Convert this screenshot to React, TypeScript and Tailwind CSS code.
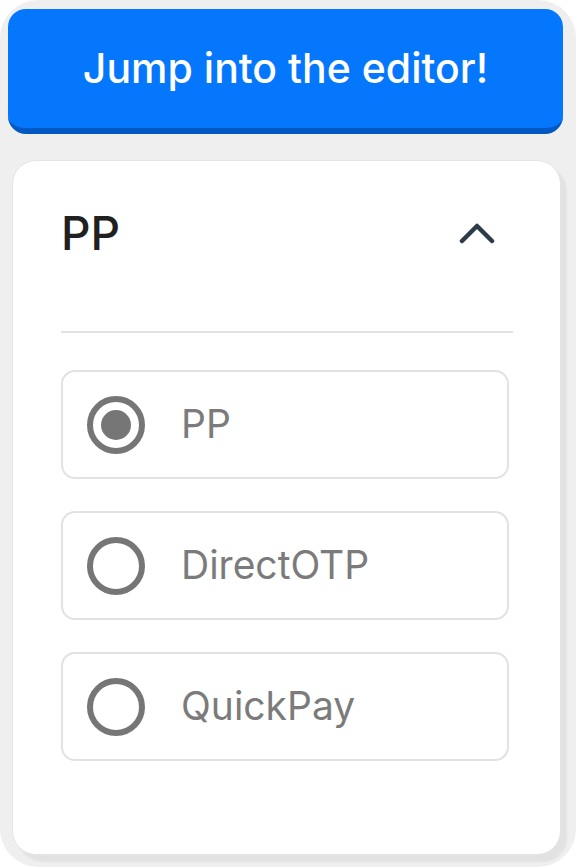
import React from "react";

const options = [
  { label: "PP", checked: true },
  { label: "DirectOTP", checked: false },
  { label: "QuickPay", checked: false },
];

export default function App() {
  return (
    <div className="w-[576px] h-[867px] bg-white">
      <div
        className="w-[576px] h-[867px] bg-[#efefef] rounded-[38px] pt-[9px] pl-[8px] flex flex-col"
        style={{ fontFamily: "Inter, 'Noto Sans', sans-serif" }}
      >
        <button className="w-[555px] h-[125px] bg-[#0477fd] border-b-[6px] border-[#0059c2] rounded-[18px] text-white text-[41px] font-medium flex items-center justify-center">
          Jump into the editor!
        </button>
        <div className="ml-[4px] mt-[26px] w-[549px] h-[695px] bg-white rounded-[24px] border border-[#e4e4e4] shadow-[6px_7px_2px_rgba(0,0,0,0.05)] pl-[48px] pr-[50px] flex flex-col">
          <div className="mt-[43px] h-[58px] flex items-center justify-between">
            <span className="text-[46px] font-medium text-[#202020] leading-none">PP</span>
            <svg width="36" height="22" viewBox="0 0 36 22" className="mr-[15px]">
              <polyline
                points="3,19 18,4 33,19"
                fill="none"
                stroke="#2c3a4a"
                strokeWidth="4.5"
                strokeLinecap="round"
                strokeLinejoin="round"
              />
            </svg>
          </div>
          <div className="mt-[69px] h-[2px] bg-[#e2e2e2] w-[452px]" />
          <div className="mt-[37px] flex flex-col gap-[32px] w-[448px]">
            {options.map((o) => (
              <div
                key={o.label}
                className="h-[109px] border-2 border-[#e2e2e2] rounded-[14px] flex items-center pl-[24px]"
              >
                <div className="w-[58px] h-[58px] rounded-full border-[6px] border-[#767676] flex items-center justify-center">
                  {o.checked && <div className="w-[30px] h-[30px] rounded-full bg-[#767676]" />}
                </div>
                <span className="ml-[36px] text-[39px] text-[#7b7b7b]">{o.label}</span>
              </div>
            ))}
          </div>
        </div>
      </div>
    </div>
  );
}
